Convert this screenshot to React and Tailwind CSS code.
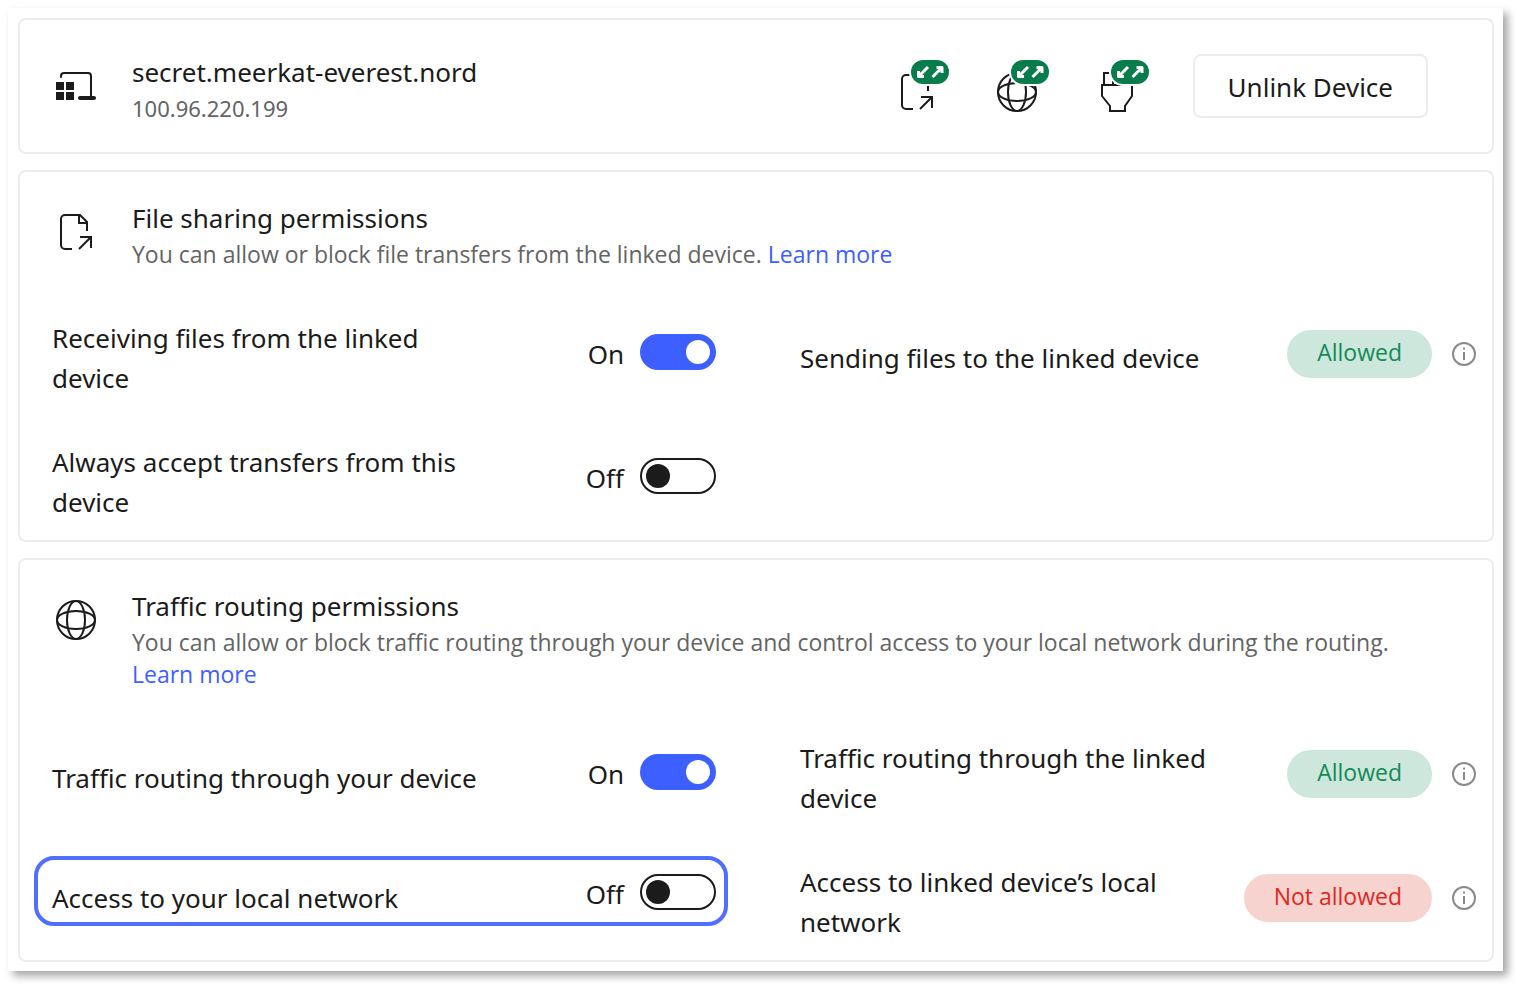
import { useState } from "react";

const stroke = { fill: "none", stroke: "#1b1b1b", strokeWidth: 2 };

function DeviceIcon() {
  return (
    <svg width="48" height="48" viewBox="0 0 48 48" className="shrink-0" aria-hidden="true">
      <path {...stroke} strokeLinecap="round" d="M9 15v-1a3 3 0 0 1 3-3h24a3 3 0 0 1 3 3v21" />
      <path {...stroke} strokeWidth="4" strokeLinecap="round" d="M28 36h14" />
      <path fill="#1b1b1b" d="M4 20h8v8H4zM14 20h8v8h-8zM4 30h8v8H4zM14 30h8v8h-8z" />
    </svg>
  );
}

function FileShape() {
  return (
    <g {...stroke}>
      <path d="M20 41h-7a4 4 0 0 1-4-4V11a4 4 0 0 1 4-4h15l7 7v9" />
      <path d="M27 7v8h8" />
      <path d="M27 41l12-12M28 29h11v11" />
    </g>
  );
}

function GlobeShape() {
  return (
    <g {...stroke}>
      <circle cx="24" cy="24" r="19" />
      <ellipse cx="24" cy="24" rx="9" ry="19" />
      <ellipse cx="24" cy="24" rx="19" ry="9" />
    </g>
  );
}

function PlugShape() {
  return (
    <g {...stroke}>
      <path d="M11 17V5h9v12M28 17V5h9v12" />
      <path d="M9 17h30v11l-7 10v5H17v-5L9 28z" />
    </g>
  );
}

function SectionIcon({ children }) {
  return (
    <svg width="48" height="48" viewBox="0 0 48 48" className="mt-[10px] shrink-0" aria-hidden="true">
      {children}
    </svg>
  );
}

// permission icon with the green two-way badge in its corner
function StatusIcon({ label, children }) {
  return (
    <svg width="56" height="52" viewBox="0 -8 56 52" className="shrink-0" role="img" aria-label={label}>
      {children}
      <rect x="16" y="-10" width="42" height="28" rx="14" fill="#fff" />
      <rect x="18" y="-8" width="38" height="24" rx="12" fill="#087d4b" />
      <g fill="none" stroke="#fff" strokeWidth="3" strokeLinejoin="round">
        <path d="M35 -1l-9.500 9.500M25.500 3v5.500h5.500" />
        <path d="M39.500 9l9.500 -9.500M43.500 -0.500h5.500v5.500" />
      </g>
    </svg>
  );
}

function Card({ children }) {
  return <section className="rounded-lg border-2 border-[#ececec]">{children}</section>;
}

function SectionHeader({ icon, title, text }) {
  return (
    <div className="flex gap-8 pl-8 pr-16">
      <SectionIcon>{icon}</SectionIcon>
      <div>
        <h2 className="leading-10">{title}</h2>
        <p className="font-['Open_Sans',sans-serif] text-[23px] leading-8 text-[#646464]">
          {text}{" "}
          <a href="#" className="inline-block text-[#3e5fff]">
            Learn more
          </a>
        </p>
      </div>
    </div>
  );
}

function Toggle({ id, label, defaultOn = false, highlighted = false }) {
  const [on, setOn] = useState(defaultOn);

  return (
    <div className={`relative flex items-center justify-between pl-8 pr-10 ${highlighted ? "h-[72px]" : "min-h-20"}`}>
      {highlighted && (
        <div className="pointer-events-none absolute -top-1.5 bottom-2 left-3.5 right-7 rounded-[20px] border-4 border-[#506eff]" />
      )}
      <label htmlFor={id} className="max-w-[440px]">
        {label}
      </label>
      <div className="flex items-center gap-4 pb-3">
        <span className="pt-1">{on ? "On" : "Off"}</span>
        <input
          id={id}
          type="checkbox"
          role="switch"
          checked={on}
          onChange={(e) => setOn(e.target.checked)}
          className="flex h-9 w-[76px] cursor-pointer appearance-none items-center rounded-full border-2 border-[#1b1b1b] px-1 before:size-6 before:rounded-full before:bg-[#1b1b1b] checked:justify-end checked:border-[#3e5fff] checked:bg-[#3e5fff] checked:before:bg-white"
        />
      </div>
    </div>
  );
}

function Status({ label, allowed = false }) {
  return (
    <div className="flex min-h-20 items-center justify-between pl-11 pr-4">
      <p className="max-w-[420px]">{label}</p>
      <div className="flex items-center gap-5 pb-2">
        <span
          className={`h-12 whitespace-nowrap rounded-full px-[30px] font-['Open_Sans',sans-serif] text-[23px] leading-[44px] ${
            allowed ? "bg-[#cde7dc] text-[#138a57]" : "bg-[#f7d3d0] text-[#e0281c]"
          }`}
        >
          {allowed ? "Allowed" : "Not allowed"}
        </span>
        <button type="button" aria-label={`About ${label}`}>
          <svg width="24" height="24" viewBox="0 0 24 24" fill="none" stroke="#8a8a8a" strokeWidth="2">
            <circle cx="12" cy="12" r="11" />
            <path d="M12 10v8M12 5.500v2" />
          </svg>
        </button>
      </div>
    </div>
  );
}

export default function App() {
  return (
    <div className="min-h-screen bg-white p-2 pb-3 pr-[13px] font-['Noto_Sans',sans-serif] text-[26px] leading-10 text-[#1b1b1b]">
      <main className="flex flex-col gap-4 bg-white pb-[9px] pl-[10px] pr-[9px] pt-[10px] shadow-[5px_5px_8px_rgba(0,0,0,0.35)]">
        <Card>
          <div className="flex items-center justify-between py-7 pl-8 pr-16">
            <div className="flex items-center gap-8">
              <DeviceIcon />
              <div className="pt-1">
                <h1 className="leading-10">secret.meerkat-everest.nord</h1>
                <p className="text-[22px] leading-8 text-[#646464]">100.96.220.199</p>
              </div>
            </div>
            <div className="flex items-center gap-11">
              <StatusIcon label="File sharing">
                <FileShape />
              </StatusIcon>
              <StatusIcon label="Traffic routing">
                <GlobeShape />
              </StatusIcon>
              <StatusIcon label="Local network">
                <PlugShape />
              </StatusIcon>
              <button type="button" className="h-16 rounded-lg border-2 border-[#ececec] px-[33px] pt-0.5">
                Unlink Device
              </button>
            </div>
          </div>
        </Card>

        <Card>
          <div className="flex flex-col gap-12 pb-[18px] pt-[26px]">
            <SectionHeader
              icon={<FileShape />}
              title="File sharing permissions"
              text="You can allow or block file transfers from the linked device."
            />
            <div className="grid grid-cols-2 gap-y-11">
              <Toggle id="receive" label="Receiving files from the linked device" defaultOn />
              <Status label="Sending files to the linked device" allowed />
              <Toggle id="accept" label="Always accept transfers from this device" />
            </div>
          </div>
        </Card>

        <Card>
          <div className="flex flex-col gap-12 pb-[18px] pt-[26px]">
            <SectionHeader
              icon={<GlobeShape />}
              title="Traffic routing permissions"
              text="You can allow or block traffic routing through your device and control access to your local network during the routing."
            />
            <div className="grid grid-cols-2 gap-y-11">
              <Toggle id="routing" label="Traffic routing through your device" defaultOn />
              <Status label="Traffic routing through the linked device" allowed />
              <Toggle id="local" label="Access to your local network" highlighted />
              <Status label="Access to linked device’s local network" />
            </div>
          </div>
        </Card>
      </main>
    </div>
  );
}
